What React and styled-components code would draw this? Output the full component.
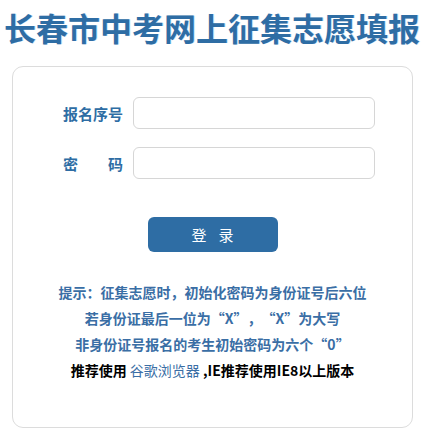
import React from "react";
import styled, { createGlobalStyle } from "styled-components";

const Global = createGlobalStyle`
  html, body { margin: 0; padding: 0; background: #fff; }
  body { font-family: "Microsoft YaHei", "Noto Sans CJK SC", "Noto Sans", sans-serif; }
  * { box-sizing: border-box; }
`;

const Page = styled.div`
  width: 430px;
`;

const Title = styled.div`
  height: 66px;
  padding: 8px 6px 0 0;
  font-family: "Noto Sans CJK SC", sans-serif;
  font-size: 32px;
  line-height: 38px;
  font-weight: 700;
  color: #2e6da4;
  text-align: center;
  white-space: nowrap;
  text-shadow: 1px 0 0 rgba(120, 170, 230, 0.35);
`;

const Body = styled.div`
  padding: 0 17px 0 12px;
`;

const Card = styled.div`
  border: 1px solid #dcdcdc;
  border-radius: 11px;
  padding: 30px 0 44px 50px;
  display: flex;
  flex-direction: column;
`;

const Row = styled.div`
  display: flex;
  align-items: center;
  gap: 10px;
  margin-bottom: ${(p) => p.$mb || 0}px;
`;

const Label = styled.label`
  width: 60px;
  font-size: 15px;
  font-weight: 700;
  color: #2e6da4;
  text-align: justify;
  text-align-last: justify;
  white-space: nowrap;
`;

const Input = styled.input`
  width: 242px;
  height: 32px;
  border: 1px solid #d6d6d6;
  border-radius: 6px;
  padding: 0 8px;
  font-size: 14px;
  outline: none;
`;

const ButtonWrap = styled.div`
  display: flex;
  justify-content: center;
  margin: 38px 0 27px -50px;
`;

const Button = styled.button`
  width: 130px;
  height: 35px;
  background: #2e6da4;
  border: none;
  border-radius: 6px;
  color: #fff;
  font-family: inherit;
  font-size: 15px;
  display: flex;
  align-items: center;
  justify-content: center;
  gap: 12px;
  cursor: pointer;
`;

const Tips = styled.div`
  margin-left: -50px;
  text-align: center;
  font-size: 14px;
  line-height: 26px;
  font-weight: 700;
`;

const TipLine = styled.div`
  color: ${(p) => (p.$dark ? "#000" : "#3a6ea5")};
  white-space: nowrap;
`;

const Quote = styled.span`
  display: inline-block;
  width: 14px;
  text-align: ${(p) => (p.$close ? "left" : "right")};
`;

const Link = styled.span`
  color: #3a6ea5;
  font-weight: 400;
`;

const Q = ({ children }) => (
  <>
    <Quote>“</Quote>
    {children}
    <Quote $close>”</Quote>
  </>
);

export default function App() {
  return (
    <Page>
      <Global />
      <Title>长春市中考网上征集志愿填报</Title>
      <Body>
        <Card>
          <Row $mb={18}>
            <Label>报名序号</Label>
            <Input type="text" />
          </Row>
          <Row>
            <Label>密 码</Label>
            <Input type="password" />
          </Row>
          <ButtonWrap>
            <Button>
              <span>登</span>
              <span>录</span>
            </Button>
          </ButtonWrap>
          <Tips>
            <TipLine>提示：征集志愿时，初始化密码为身份证号后六位</TipLine>
            <TipLine>
              若身份证最后一位为<Q>X</Q>，<Q>X</Q>为大写
            </TipLine>
            <TipLine>
              非身份证号报名的考生初始密码为六个<Q>0</Q>
            </TipLine>
            <TipLine $dark>
              推荐使用 <Link>谷歌浏览器</Link> ,IE推荐使用IE8以上版本
            </TipLine>
          </Tips>
        </Card>
      </Body>
    </Page>
  );
}
